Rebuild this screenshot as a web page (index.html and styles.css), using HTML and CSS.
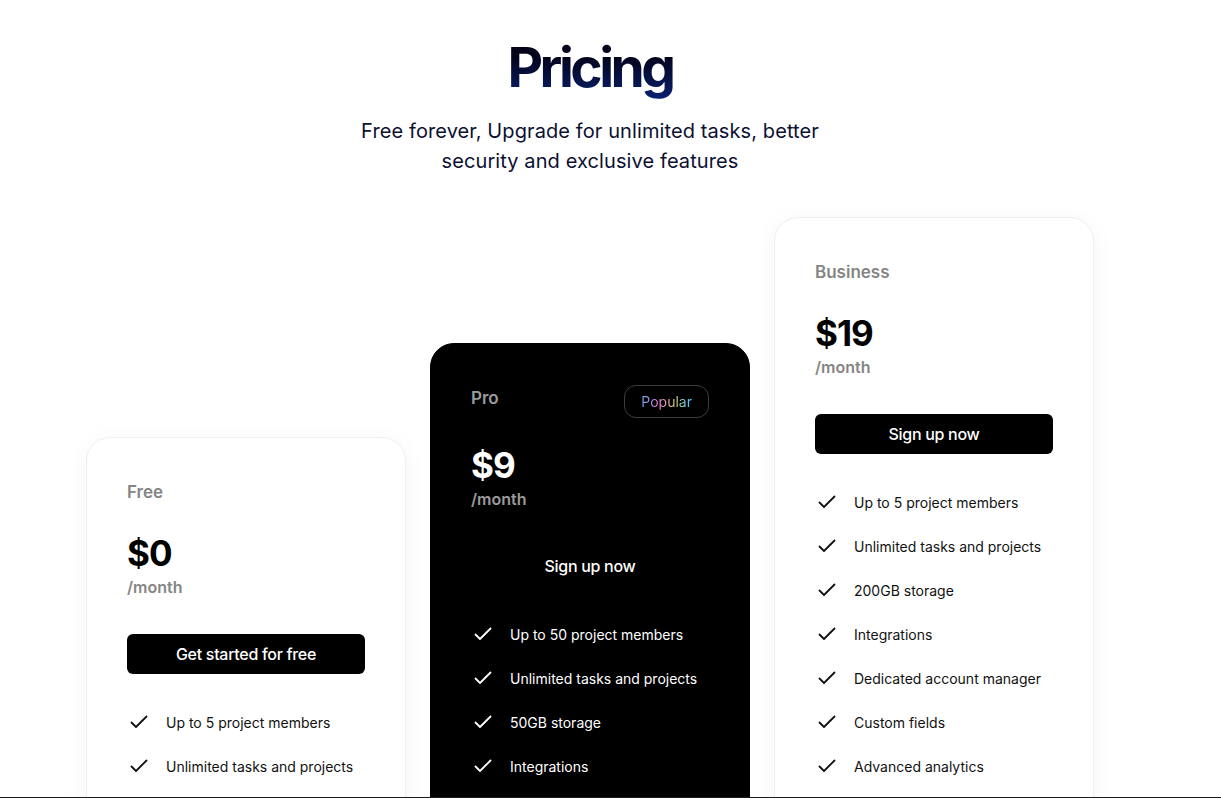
FILE: index.html
```html
<!DOCTYPE html>
<html lang="en">
<head>
<meta charset="utf-8">
<title>Pricing</title>
<link rel="stylesheet" href="styles.css">
</head>
<body>
<main class="page">
  <header class="intro">
    <h1 class="heading">Pricing</h1>
    <p class="lead">Free forever, Upgrade for unlimited tasks, better security and exclusive features</p>
  </header>

  <section class="plans">
    <article class="plan">
      <div class="plan-head"><h2 class="plan-name">Free</h2></div>
      <div class="price">$0</div>
      <div class="per">/month</div>
      <a class="btn" href="#">Get started for free</a>
      <ul class="features">
        <li><svg class="check" viewBox="0 0 18 14"><path d="M1.5 7.5l4.5 4.5L16.5 1.5"/></svg>Up to 5 project members</li>
        <li><svg class="check" viewBox="0 0 18 14"><path d="M1.5 7.5l4.5 4.5L16.5 1.5"/></svg>Unlimited tasks and projects</li>
        <li><svg class="check" viewBox="0 0 18 14"><path d="M1.5 7.5l4.5 4.5L16.5 1.5"/></svg>2GB storage</li>
        <li><svg class="check" viewBox="0 0 18 14"><path d="M1.5 7.5l4.5 4.5L16.5 1.5"/></svg>Integrations</li>
      </ul>
    </article>

    <article class="plan plan-dark">
      <div class="plan-head"><h2 class="plan-name">Pro</h2><span class="badge"><span class="badge-text">Popular</span></span></div>
      <div class="price">$9</div>
      <div class="per">/month</div>
      <a class="btn" href="#">Sign up now</a>
      <ul class="features">
        <li><svg class="check" viewBox="0 0 18 14"><path d="M1.5 7.5l4.5 4.5L16.5 1.5"/></svg>Up to 50 project members</li>
        <li><svg class="check" viewBox="0 0 18 14"><path d="M1.5 7.5l4.5 4.5L16.5 1.5"/></svg>Unlimited tasks and projects</li>
        <li><svg class="check" viewBox="0 0 18 14"><path d="M1.5 7.5l4.5 4.5L16.5 1.5"/></svg>50GB storage</li>
        <li><svg class="check" viewBox="0 0 18 14"><path d="M1.5 7.5l4.5 4.5L16.5 1.5"/></svg>Integrations</li>
        <li><svg class="check" viewBox="0 0 18 14"><path d="M1.5 7.5l4.5 4.5L16.5 1.5"/></svg>Priority support</li>
        <li><svg class="check" viewBox="0 0 18 14"><path d="M1.5 7.5l4.5 4.5L16.5 1.5"/></svg>Advanced analytics</li>
      </ul>
    </article>

    <article class="plan">
      <div class="plan-head"><h2 class="plan-name">Business</h2></div>
      <div class="price">$19</div>
      <div class="per">/month</div>
      <a class="btn" href="#">Sign up now</a>
      <ul class="features">
        <li><svg class="check" viewBox="0 0 18 14"><path d="M1.5 7.5l4.5 4.5L16.5 1.5"/></svg>Up to 5 project members</li>
        <li><svg class="check" viewBox="0 0 18 14"><path d="M1.5 7.5l4.5 4.5L16.5 1.5"/></svg>Unlimited tasks and projects</li>
        <li><svg class="check" viewBox="0 0 18 14"><path d="M1.5 7.5l4.5 4.5L16.5 1.5"/></svg>200GB storage</li>
        <li><svg class="check" viewBox="0 0 18 14"><path d="M1.5 7.5l4.5 4.5L16.5 1.5"/></svg>Integrations</li>
        <li><svg class="check" viewBox="0 0 18 14"><path d="M1.5 7.5l4.5 4.5L16.5 1.5"/></svg>Dedicated account manager</li>
        <li><svg class="check" viewBox="0 0 18 14"><path d="M1.5 7.5l4.5 4.5L16.5 1.5"/></svg>Custom fields</li>
        <li><svg class="check" viewBox="0 0 18 14"><path d="M1.5 7.5l4.5 4.5L16.5 1.5"/></svg>Advanced analytics</li>
        <li><svg class="check" viewBox="0 0 18 14"><path d="M1.5 7.5l4.5 4.5L16.5 1.5"/></svg>Admin roles</li>
        <li><svg class="check" viewBox="0 0 18 14"><path d="M1.5 7.5l4.5 4.5L16.5 1.5"/></svg>24/7 support</li>
      </ul>
    </article>
  </section>
</main>
<div class="edge"></div>
</body>
</html>
```

FILE: styles.css
```css
* { box-sizing: border-box; }

html, body {
  margin: 0;
  padding: 0;
  background: #ffffff;
}

body {
  font-family: "Inter", "Noto Sans", "Liberation Sans", sans-serif;
  color: #000;
}

.page {
  width: 1180px;
  padding: 31px 0 80px;
}

.intro {
  display: flex;
  flex-direction: column;
  align-items: center;
  text-align: center;
}

.heading {
  margin: 0;
  font-size: 55px;
  line-height: 72px;
  font-weight: 700;
  letter-spacing: -3.5px;
  background: linear-gradient(180deg, #03031a 35%, #0a2378 100%);
  -webkit-background-clip: text;
  background-clip: text;
  color: transparent;
}

.lead {
  margin: 13px 0 0;
  width: 480px;
  font-size: 20px;
  line-height: 30px;
  font-weight: 400;
  color: #0b1033;
  letter-spacing: 0.1px;
}

.plans {
  margin-top: 41px;
  display: flex;
  justify-content: center;
  align-items: flex-end;
  gap: 24px;
}

.plan {
  width: 320px;
  padding: 43px 40px 40px;
  background: #fff;
  border: 1px solid #efefef;
  border-radius: 24px;
  box-shadow: 0 4px 24px rgba(0, 0, 0, 0.045);
}

.plan-dark {
  background: #000;
  border-color: #000;
  box-shadow: none;
  color: #fff;
}

.plan-head {
  display: flex;
  align-items: flex-start;
  justify-content: space-between;
}

.plan-name {
  margin: 0;
  font-size: 17px;
  line-height: 22px;
  font-weight: 600;
  color: #858585;
}

.plan-dark .plan-name { color: #9b9b9b; }

.badge {
  margin: -2px 0 -3px;
  height: 33px;
  padding: 0 16px;
  display: flex;
  align-items: center;
  border: 1px solid #3d3d3d;
  border-radius: 12px;
  font-size: 14px;
}

.badge-text {
  background: linear-gradient(90deg, #62a8ec 0%, #e47ad6 35%, #e2b6a0 55%, #cdd274 68%, #58c8ec 90%);
  -webkit-background-clip: text;
  background-clip: text;
  color: transparent;
}

.price {
  margin-top: 30px;
  font-size: 35px;
  line-height: 40px;
  font-weight: 700;
  letter-spacing: -1px;
}

.per {
  margin-top: 2px;
  font-size: 16px;
  line-height: 24px;
  font-weight: 600;
  color: #858585;
}

.plan-dark .per { color: #9b9b9b; }

.btn {
  display: flex;
  align-items: center;
  justify-content: center;
  margin-top: 35px;
  height: 40px;
  border-radius: 6px;
  background: #000;
  color: #fff;
  font-size: 16px;
  font-weight: 500;
  letter-spacing: -0.3px;
  text-decoration: none;
}

.features {
  list-style: none;
  margin: 26px 0 0;
  padding: 0;
}

.features li {
  display: flex;
  align-items: center;
  height: 44px;
  font-size: 14px;
  color: #111;
}

.plan-dark .features li { color: #fff; }

.check {
  width: 18px;
  height: 14px;
  margin: 0 18px 0 3px;
  fill: none;
  stroke: currentColor;
  stroke-width: 1.8;
  stroke-linecap: round;
  stroke-linejoin: round;
}

.edge {
  position: fixed;
  left: 0;
  right: 0;
  bottom: 0;
  height: 1px;
  background: #1c1c1c;
}
```
